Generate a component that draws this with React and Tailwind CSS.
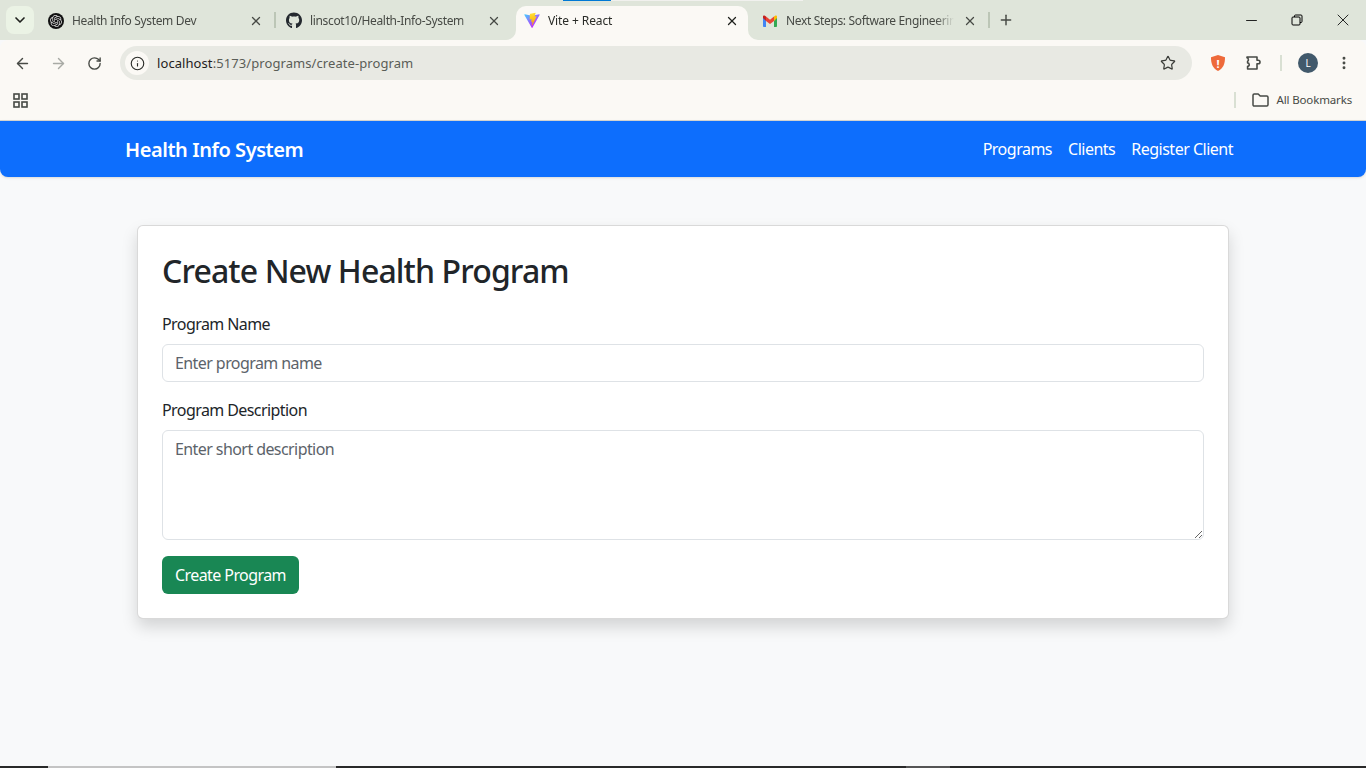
import React from 'react';
import { ArrowLeft, ArrowRight, RotateCw, Info, Star, X, Plus, Minus, ChevronDown, EllipsisVertical } from 'lucide-react';
import { FaGithub } from 'react-icons/fa';
import { SiOpenai } from 'react-icons/si';

const ViteIcon = () => (
  <svg width="17" height="17" viewBox="0 0 410 404" fill="none">
    <defs>
      <linearGradient id="viteA" x1="6" y1="33" x2="235" y2="344" gradientUnits="userSpaceOnUse">
        <stop stopColor="#41D1FF" />
        <stop offset="1" stopColor="#BD34FE" />
      </linearGradient>
      <linearGradient id="viteB" x1="194" y1="8" x2="236" y2="292" gradientUnits="userSpaceOnUse">
        <stop stopColor="#FFEA83" />
        <stop offset="0.08" stopColor="#FFDD35" />
        <stop offset="1" stopColor="#FFA800" />
      </linearGradient>
    </defs>
    <path d="M399.641 59.5246L215.643 388.545C211.844 395.338 202.084 395.378 198.228 388.618L10.5817 59.5563C6.38087 52.1896 12.6802 43.2665 21.0281 44.7586L205.223 77.6824C206.398 77.8924 207.601 77.8904 208.776 77.6763L389.119 44.8058C397.439 43.2894 403.768 52.1434 399.641 59.5246Z" fill="url(#viteA)" />
    <path d="M292.965 1.5744L156.801 28.2552C154.563 28.6937 152.906 30.5903 152.771 32.8664L144.395 174.33C144.198 177.662 147.258 180.248 150.51 179.498L188.42 170.749C191.967 169.931 195.172 173.055 194.443 176.622L183.18 231.775C182.422 235.487 185.907 238.661 189.532 237.56L212.947 230.446C216.577 229.344 220.065 232.527 219.297 236.242L201.398 322.875C200.278 328.294 207.486 331.249 210.492 326.603L212.5 323.5L323.454 102.072C325.312 98.3645 322.108 94.137 318.036 94.9228L279.014 102.454C275.347 103.161 272.227 99.746 273.262 96.1583L298.731 7.86689C299.767 4.27314 296.636 0.855181 292.965 1.5744Z" fill="url(#viteB)" />
  </svg>
);

const GmailIcon = () => (
  <svg width="16" height="16" viewBox="0 0 16 16" fill="none">
    <path d="M1 4v9.2c0 .4.4.8.8.8H4V7.2L1 4z" fill="#4285F4" />
    <path d="M12 14h2.2c.4 0 .8-.4.8-.8V4l-3 3.2V14z" fill="#34A853" />
    <path d="M4 8V3.6L8 6.8l4-3.2V8L8 11 4 8z" fill="#EA4335" />
    <path d="M1 3.4V5l3 3V3.6L2.9 2.7C2.1 2.1 1 2.6 1 3.4z" fill="#C5221F" />
    <path d="M12 3.6V8l3-3V3.4c0-.8-1.1-1.3-1.9-.7L12 3.6z" fill="#FBBC04" />
  </svg>
);

const OpenAiIcon = () => (
  <span className="flex h-4 w-4 items-center justify-center rounded-full bg-[#111111]">
    <SiOpenai size={12} color="#d8d8d8" />
  </span>
);

const tabs = [
  { title: 'Health Info System Dev', icon: <OpenAiIcon /> },
  { title: 'linscot10/Health-Info-System', icon: <FaGithub size={17} color="#24292f" /> },
  { title: 'Vite + React', icon: <ViteIcon />, active: true },
  { title: 'Next Steps: Software Engineering', icon: <GmailIcon /> },
];

const Tab = ({ tab, separator }) => (
  <>
    <div className={`relative flex h-[34px] w-[232px] shrink-0 items-center rounded-t-[10px] pb-[5px] pl-2 pr-[9px] ${tab.active ? 'bg-[#fbf9f5]' : ''}`}>
      {tab.active && (
        <>
          <svg className="absolute bottom-0 left-[-10px]" width="10" height="10" viewBox="0 0 10 10">
            <path d="M10 0v10H0a10 10 0 0 0 10-10z" fill="#fbf9f5" />
          </svg>
          <svg className="absolute bottom-0 right-[-10px]" width="10" height="10" viewBox="0 0 10 10">
            <path d="M0 0v10h10A10 10 0 0 1 0 0z" fill="#fbf9f5" />
          </svg>
        </>
      )}
      <span className="flex w-4 shrink-0 items-center justify-center">{tab.icon}</span>
      <span className={`ml-2 w-[168px] shrink-0 overflow-hidden whitespace-nowrap text-[12px] [mask-image:linear-gradient(to_right,black_150px,transparent_168px)] ${tab.active ? 'tracking-[-0.1px] text-[#2a2c28]' : 'tracking-[-0.34px] text-[#474a45]'}`}>
        {tab.title}
      </span>
      <X size={14} strokeWidth={2.2} className={`ml-auto ${tab.active ? 'text-[#1f211d]' : 'text-[#474a45]'}`} />
    </div>
    <div className="mb-3 flex h-4 w-[6px] shrink-0 justify-center">
      {separator && <div className="h-4 w-[2px] bg-[#bcc6b6]" />}
    </div>
  </>
);

const TabStrip = () => (
  <div className="relative flex h-10 shrink-0 items-end bg-[#dfe5da] text-[#474a45]">
    <div className="absolute left-[563px] top-0 h-px w-12 bg-[#0078d4]" />
    <div className="absolute left-[611px] top-0 h-px w-[192px] bg-[#f1f1ee]" />
    <div className="mb-[6px] ml-[6px] mr-[6px] flex h-7 w-7 shrink-0 items-center justify-center rounded-lg bg-[#ebf3e5]">
      <ChevronDown size={16} strokeWidth={2.5} className="text-[#1f211d]" />
    </div>
    <Tab tab={tabs[0]} separator />
    <Tab tab={tabs[1]} />
    <Tab tab={tabs[2]} />
    <Tab tab={tabs[3]} separator />
    <div className="mb-[9px] ml-[3px] flex h-[22px] w-[22px] items-center justify-center">
      <Plus size={16} strokeWidth={2.2} />
    </div>
    <div className="ml-auto flex h-10 self-start text-black">
      <div className="flex w-[46px] items-center justify-center"><Minus size={17} strokeWidth={1.2} /></div>
      <div className="flex w-[46px] items-center justify-center">
        <svg width="12" height="12" viewBox="0 0 12 12" fill="none" stroke="currentColor" strokeWidth="1">
          <rect x="1" y="3" width="8" height="8" rx="1" />
          <path d="M3.5 3V2a1 1 0 0 1 1-1H10a1 1 0 0 1 1 1v5.5a1 1 0 0 1-1 1H9" />
        </svg>
      </div>
      <div className="flex w-[46px] items-center justify-center"><X size={20} strokeWidth={1} /></div>
    </div>
  </div>
);

const ToolButton = ({ children }) => (
  <div className="flex h-9 w-9 shrink-0 items-center justify-center text-[#474a45]">{children}</div>
);

const Toolbar = () => (
  <div className="flex h-10 shrink-0 items-center rounded-t-[8px] bg-[#fbf9f5] pl-1 pr-1 pt-[6px]">
    <ToolButton><ArrowLeft size={17} strokeWidth={2} /></ToolButton>
    <ToolButton><ArrowRight size={17} strokeWidth={2} className="text-[#a8aaa5]" /></ToolButton>
    <ToolButton><RotateCw size={15} strokeWidth={2.2} /></ToolButton>
    <div className="ml-2 flex h-[34px] flex-1 items-center rounded-full bg-[#e8e9e3] pl-[5px] pr-4">
      <div className="flex h-6 w-6 items-center justify-center rounded-full bg-[#fbf9f5]">
        <Info size={15} strokeWidth={1.8} className="text-[#2a2c28]" />
      </div>
      <span className="ml-2 whitespace-nowrap pt-[2px] text-[13px] tracking-[0.08px] text-[#5a5d57]">
        <span className="text-[#1f211d]">localhost</span>:5173/programs/create-program
      </span>
      <Star size={16} strokeWidth={1.8} className="ml-auto text-[#3a3c38]" />
    </div>
    <div className="ml-2 flex">
      <ToolButton>
        <div className="relative flex h-[18px] w-4 items-center justify-center">
          <svg className="absolute inset-0" width="16" height="18" viewBox="0 0 16 18">
            <path d="M1 3.2 8 1l7 2.2c.2 6.5-2 11.3-7 13.8C3 14.5.8 9.7 1 3.2z" fill="#ee6a3a" />
          </svg>
          <span className="relative text-[11px] font-bold leading-none text-white">!</span>
        </div>
      </ToolButton>
      <ToolButton>
        <svg width="18" height="18" viewBox="0 0 18 18" fill="none" stroke="currentColor" strokeWidth="1.6" strokeLinejoin="round">
          <path d="M2 3h10v3.2h1.2a1.7 1.7 0 0 1 0 3.6H12V15H2.6v-2.7a1.6 1.6 0 0 0 0-3.3V7.400a2 2 0 0 0 .8-2A2 2 0 0 0 2 3.800z" />
        </svg>
      </ToolButton>
    </div>
    <div className="flex w-[18px] justify-center"><div className="h-4 w-[2px] bg-[#d9e0d3]" /></div>
    <ToolButton>
      <div className="flex h-5 w-5 items-center justify-center rounded-full bg-[#41596b] text-[10px] text-white">L</div>
    </ToolButton>
    <ToolButton><EllipsisVertical size={16} strokeWidth={2.4} /></ToolButton>
  </div>
);

const BookmarksBar = () => (
  <div className="flex h-[41px] shrink-0 items-center border-b border-b-[#d6d6d2] bg-[#fbf9f5] pl-[13px] pr-[14px]">
    <svg width="15" height="15" viewBox="0 0 15 15" fill="none" stroke="#474a45" strokeWidth="1.6">
      <rect x="1" y="1" width="5" height="5" />
      <rect x="9" y="1" width="5" height="5" />
      <rect x="1" y="9" width="5" height="5" />
      <rect x="9" y="9" width="5" height="5" />
    </svg>
    <div className="ml-auto h-4 w-[2px] bg-[#d9e0d3]" />
    <svg className="ml-4" width="17" height="14" viewBox="0 0 17 14" fill="none" stroke="#474a45" strokeWidth="1.5" strokeLinejoin="round">
      <path d="M1 2.2C1 1.5 1.5 1 2.2 1h4l2 2h6.600c.7 0 1.200.5 1.200 1.200v7.600c0 .7-.5 1.200-1.200 1.200H2.200C1.500 13 1 12.500 1 11.800z" />
    </svg>
    <span className="ml-2 whitespace-nowrap text-[11.5px] tracking-[-0.15px] text-[#474a45]">All Bookmarks</span>
  </div>
);

const Navbar = () => (
  <nav className="flex h-14 shrink-0 items-center justify-between rounded-b-lg bg-[#0d6efd] pl-[125px] pr-[133px] shadow-sm">
    <a className="pt-[2px] text-xl font-semibold tracking-[-0.44px] text-white">Health Info System</a>
    <div className="flex gap-4 text-base tracking-[-0.5px] text-white">
      <a>Programs</a>
      <a>Clients</a>
      <a>Register Client</a>
    </div>
  </nav>
);

const CreateProgram = () => (
  <main className="flex-1 pt-12">
    <div className="mx-auto w-[1092px] rounded-md border border-black/15 bg-white p-6 shadow-[0_8px_16px_rgba(0,0,0,0.15)]">
      <h2 className="mb-[22px] pt-[2px] text-[32px] font-medium leading-[38.4px] tracking-[-0.88px] text-[#212529]">Create New Health Program</h2>
      <form className="tracking-[-0.58px]">
        <div className="mb-4">
          <label className="mb-2 block text-base text-[#212529]">Program Name</label>
          <input
            type="text"
            placeholder="Enter program name"
            className="block h-[38px] w-full rounded-md border border-[#dee2e6] bg-white px-3 text-base tracking-[-0.58px] text-[#212529] placeholder:text-[#5c636a] outline-none"
          />
        </div>
        <div className="mb-4">
          <label className="mb-2 block text-base text-[#212529]">Program Description</label>
          <textarea
            placeholder="Enter short description"
            className="block h-[110px] w-full rounded-md border border-[#dee2e6] bg-white px-3 py-[6px] text-base tracking-[-0.58px] text-[#212529] placeholder:text-[#5c636a] outline-none"
          />
        </div>
        <button type="button" className="h-[38px] rounded-md bg-[#198754] px-[13px] text-base tracking-[-0.58px] text-white">
          Create Program
        </button>
      </form>
    </div>
  </main>
);

// bottom edge of the captured window
const BottomEdge = () => (
  <div className="flex h-[2px] shrink-0 bg-[#292929]">
    <div className="ml-12 w-[288px] bg-[#c4c4c4]" />
    <div className="ml-[570px] w-11 bg-[#555555]" />
  </div>
);

export default function App() {
  return (
    <div className="flex h-screen flex-col overflow-hidden bg-[#f8f9fa] font-['Noto_Sans',sans-serif]">
      <TabStrip />
      <Toolbar />
      <BookmarksBar />
      <Navbar />
      <CreateProgram />
      <BottomEdge />
    </div>
  );
}
